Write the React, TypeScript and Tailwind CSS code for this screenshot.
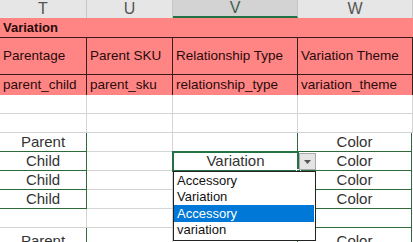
import React from 'react';

const widths = ['w-[87px]', 'w-[86px]', 'w-[125px]', 'w-[115px]'];

function HeadCell({ label, active, w }: { label: string; active?: boolean; w: string }) {
  return (
    <div
      className={`${w} h-full flex items-center justify-center border-r border-[#c6c6c6] text-[16px] ${
        active ? 'bg-[#d3d3d3] text-[#3f5f4d] border-b-2 border-b-[#217346]' : 'bg-[#e6e6e6] text-[#555]'
      }`}
    >
      {label}
    </div>
  );
}

function PinkCell({ children, w }: { children?: React.ReactNode; w: string }) {
  return (
    <div className={`${w} h-full flex items-center px-[3px] border-r border-[#3a1a1a] text-[13.5px] text-[#2a0a0a] whitespace-nowrap overflow-hidden`}>
      {children}
    </div>
  );
}

type Cell = { text?: string; green?: boolean };

function DataRow({ cells, last }: { cells: Cell[]; last?: boolean }) {
  return (
    <div className="flex h-[19px]">
      {cells.map((c, i) => (
        <div
          key={i}
          className={`${widths[i]} h-full flex items-center justify-center text-[15px] text-[#333] border-b border-r ${
            c.green ? 'border-[#2f6b3a]' : 'border-[#d4d4d4]'
          } ${i === 3 && c.green ? 'border-l border-l-[#2f6b3a] -ml-px' : ''} ${last ? 'items-start pt-[2px]' : ''}`}
        >
          {c.text}
        </div>
      ))}
    </div>
  );
}

export default function App() {
  const rows: Cell[][] = [
    [{}, {}, {}, {}],
    [{}, {}, {}, {}],
    [{ text: 'Parent', green: true }, {}, {}, { text: 'Color', green: true }],
    [{ text: 'Child', green: true }, {}, { text: '' }, { text: 'Color', green: true }],
    [{ text: 'Child', green: true }, {}, {}, { text: 'Color', green: true }],
    [{ text: 'Child', green: true }, {}, {}, { text: 'Color', green: true }],
    [{}, {}, {}, { green: true }],
  ];

  return (
    <div className="relative w-[413px] h-[242px] overflow-hidden bg-white font-['Liberation_Sans',Arial,sans-serif]">
      {/* column headers */}
      <div className="flex h-[18px]">
        <HeadCell label="T" w={widths[0]} />
        <HeadCell label="U" w={widths[1]} />
        <HeadCell label="V" w={widths[2]} active />
        <HeadCell label="W" w={widths[3]} />
      </div>

      {/* pink block */}
      <div className="bg-[#ff8585]">
        <div className="h-[20px] flex items-center px-[3px] border-b border-[#3a1a1a] text-[13px] font-bold text-[#2a0a0a]">
          Variation
        </div>
        <div className="flex h-[37px] border-b border-[#3a1a1a]">
          <PinkCell w={widths[0]}>Parentage</PinkCell>
          <PinkCell w={widths[1]}>Parent SKU</PinkCell>
          <PinkCell w={widths[2]}>Relationship Type</PinkCell>
          <PinkCell w={widths[3]}>Variation Theme</PinkCell>
        </div>
        <div className="flex h-[20px]">
          <PinkCell w={widths[0]}>parent_child</PinkCell>
          <PinkCell w={widths[1]}>parent_sku</PinkCell>
          <PinkCell w={widths[2]}>relationship_type</PinkCell>
          <PinkCell w={widths[3]}>variation_theme</PinkCell>
        </div>
      </div>

      {rows.map((r, i) => (
        <DataRow key={i} cells={r} />
      ))}
      <DataRow cells={[{ text: 'Parent', green: true }, {}, {}, { text: 'Color', green: true }]} last />

      {/* active cell with dropdown */}
      <div className="absolute left-[172px] top-[151px] w-[127px] h-[21px] border-2 border-[#217346] bg-white flex items-center justify-center text-[15px] text-[#333]">
        Variation
        <div className="absolute -right-[4px] -bottom-[4px] w-[5px] h-[5px] bg-[#217346] border border-white" />
      </div>
      <div className="absolute left-[299px] top-[153px] w-[17px] h-[17px] bg-[#e4e4e4] border border-[#a8a8a8] flex items-center justify-center">
        <svg width="7" height="4" viewBox="0 0 7 4">
          <path d="M0 0h7L3.5 4z" fill="#555" />
        </svg>
      </div>
      <div className="absolute left-[173px] top-[171px] w-[143px] h-[70px] bg-white border border-[#222] py-[1px] text-[13px] text-[#111]">
        <div className="h-[16px] leading-[16px] px-[3px]">Accessory</div>
        <div className="h-[16px] leading-[16px] px-[3px]">Variation</div>
        <div className="h-[17px] leading-[17px] px-[3px] mr-[1px] bg-[#0078d7] text-white">Accessory</div>
        <div className="h-[16px] leading-[16px] px-[3px]">variation</div>
      </div>
    </div>
  );
}
